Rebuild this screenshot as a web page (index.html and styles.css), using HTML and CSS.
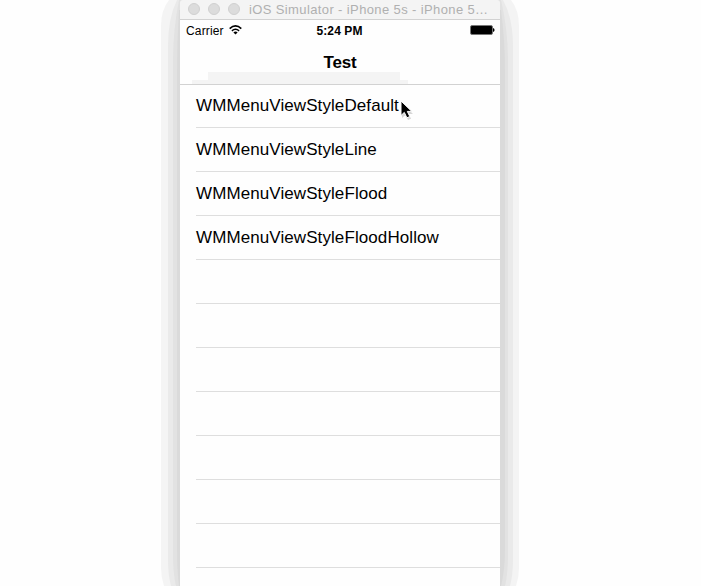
FILE: index.html
```html
<!DOCTYPE html>
<html lang="en">
<head>
<meta charset="utf-8">
<title>Test</title>
<link rel="stylesheet" href="styles.css">
</head>
<body>
<div class="window">
  <svg class="shadow" width="358" height="586" viewBox="161 0 358 586">
    <path fill="#f4f4f4" d="M169 0Q161 10 161 26V568Q161 577 164 586H516Q519 577 519 568V26Q519 10 511 0z"/>
    <path fill="#eaeaea" d="M177 0Q168 18 168 46V560Q168 575 171 586H510Q513 575 513 560V46Q513 18 503 0z"/>
    <path fill="#e2e2e2" d="M179 0Q173 30 173 60V555Q173 574 176 586H505Q508 574 508 555V60Q508 30 501 0z"/>
    <path fill="#dadada" d="M179 10Q177 40 177 70V550Q177 570 179 586H501Q505 570 505 550V70Q505 40 501 10z"/>
  </svg>
  <header class="titlebar">
    <i class="light"></i><i class="light"></i><i class="light"></i>
    <span class="caption">iOS Simulator - iPhone 5s - iPhone 5…</span>
  </header>
  <div class="screen">
    <div class="status">
      <span class="carrier">Carrier</span>
      <svg class="wifi" width="13" height="10" viewBox="0 0 13 10" fill="none" stroke="#000">
        <path d="M.7 3.6Q6.5-1.7 12.3 3.6" stroke-width="1.7"/>
        <path d="M2.9 5.9Q6.5 2.7 10.1 5.9" stroke-width="1.5"/>
        <path d="M4.4 7.4Q6.5 5.8 8.6 7.4L6.5 9.6z" fill="#000" stroke="none"/>
      </svg>
      <span class="time">5:24 PM</span>
      <svg class="battery" width="25" height="10" viewBox="0 0 25 10">
        <rect x=".5" y=".5" width="22" height="9" rx="1.5" fill="#000" stroke="#777"/>
        <path d="M23 3Q24.6 3.3 24.6 5T23 7z" fill="#000"/>
      </svg>
    </div>
    <nav class="navbar">
      <h1>Test</h1>
      <i class="smudge"></i><i class="smudge wide"></i>
    </nav>
    <ul class="list">
      <li>WMMenuViewStyleDefault</li>
      <li>WMMenuViewStyleLine</li>
      <li>WMMenuViewStyleFlood</li>
      <li>WMMenuViewStyleFloodHollow</li>
      <li></li><li></li><li></li><li></li><li></li><li></li><li></li><li></li>
    </ul>
  </div>
</div>
<svg class="cursor" width="16" height="22" viewBox="0 0 16 22">
  <path d="M2 3V18L5.5 15L8 20L11 18.7L8.7 14H13z" fill="#bbb" opacity=".6"/>
  <path d="M1 1V15.5L4.3 12.4L6.9 17.8L9.8 16.5L7.3 11.4H11.8z" fill="#000" stroke="#fff" stroke-width="1"/>
</svg>
</body>
</html>
```
FILE: styles.css
```css
* { box-sizing: border-box; }
html, body { height: 100%; }
body {
  margin: 0;
  overflow: hidden;
  background: #fefefe;
  font-family: "Liberation Sans", Arial, sans-serif;
  color: #000;
}
.window {
  position: relative;
  z-index: 0;
  width: 322px;
  height: 586px;
  margin-left: 179px;
  border: solid #b5b5b5;
  border-width: 0 1px;
  border-radius: 4px 4px 0 0;
}
.shadow {
  position: absolute;
  z-index: -1;
  top: 0;
  left: -19px;
}
.titlebar {
  display: flex;
  align-items: center;
  height: 20px;
  padding: 0 0 1px 8px;
  border-bottom: 1px solid #d2d2d2;
  border-radius: 3px 3px 0 0;
  background: #f4f4f4;
}
.light {
  width: 12px;
  height: 12px;
  margin-right: 8px;
  border: 1px solid #d0d0d0;
  border-radius: 50%;
  background: #dcdcdc;
}
.caption {
  margin-left: 1px;
  padding-top: 1px;
  font-size: 13px;
  letter-spacing: .38px;
  line-height: 18px;
  color: #b0b0b0;
  white-space: nowrap;
}
.screen {
  height: 566px;
  overflow: hidden;
  background: #fefefe;
}
.status {
  display: grid;
  grid-template-columns: 49px 1fr 80px 1fr 25px;
  align-items: center;
  height: 20px;
  padding: 0 5px 0 0;
  font-size: 12px;
}
.carrier { padding: 1px 0 0 6px; letter-spacing: .15px; }
.time {
  margin-left: 7px;
  padding-top: 1px;
  font-weight: bold;
  letter-spacing: .1px;
  white-space: nowrap;
}
.battery { grid-column: 5; }
.navbar {
  display: flex;
  flex-direction: column;
  align-items: center;
  height: 45px;
  border-bottom: 1px solid #d2d2d2;
}
h1 {
  height: 32px;
  margin: 0;
  font-size: 17px;
  letter-spacing: -.2px;
  line-height: 45px;
}
.smudge { flex: none; width: 192px; height: 8px; margin-right: 72px; background: #f4f4f4; }
.smudge.wide { width: 216px; height: 4px; margin-right: 80px; }
.list {
  margin: 0 0 0 16px;
  padding: 0;
  list-style: none;
}
.list li {
  height: 44px;
  border-bottom: 1px solid #dedede;
  font-size: 17px;
  letter-spacing: .09px;
  line-height: 43px;
}
.list li:first-child { height: 43px; line-height: 41px; }
.cursor { position: absolute; left: 400px; top: 100px; }
```
